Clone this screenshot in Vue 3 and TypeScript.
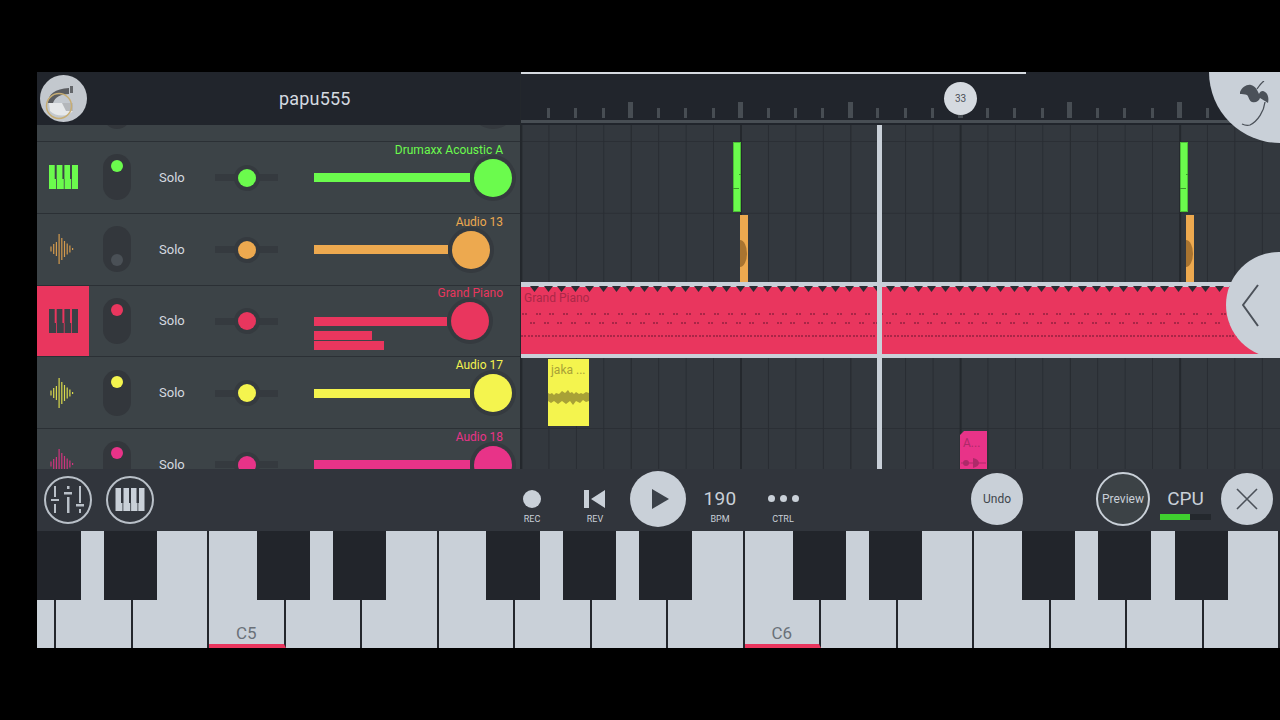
<script setup lang="ts">
interface Track { name: string; color: string; icon: 'keys' | 'wave'; on: boolean; bar: number; selected?: boolean; extras?: number[] }
interface Clip { x: number; y: number; w: number; h: number; color: string }

const tracks: Track[] = [
  { name: '', color: '#5d6469', icon: 'keys', on: true, bar: 156 },
  { name: 'Drumaxx Acoustic A', color: '#6bfb4d', icon: 'keys', on: true, bar: 156 },
  { name: 'Audio 13', color: '#eda94f', icon: 'wave', on: false, bar: 134 },
  { name: 'Grand Piano', color: '#e9365e', icon: 'keys', on: true, bar: 133, selected: true, extras: [58, 70] },
  { name: 'Audio 17', color: '#f4f44e', icon: 'wave', on: true, bar: 156 },
  { name: 'Audio 18', color: '#e83388', icon: 'wave', on: true, bar: 156 },
]

const clips: Clip[] = [
  { x: 212, y: 17, w: 8, h: 70, color: '#6bfb4d' },
  { x: 219, y: 90, w: 8, h: 67, color: '#eda94f' },
  { x: 659, y: 17, w: 8, h: 70, color: '#6bfb4d' },
  { x: 665, y: 90, w: 8, h: 67, color: '#eda94f' },
]

const ticks = Array.from({ length: 28 }, (_, i) => i % 4 === 3)
const waveBars = [5, 10, 14, 30, 22, 16, 11, 7, 2]
const whiteKeys = Array.from({ length: 17 }, (_, i) => (i === 3 ? 'C5' : i === 10 ? 'C6' : ''))
const blackKeys: [number, number][] = [
  [0, 44], [67, 53], [220, 53], [296, 53], [449, 54], [526, 53],
  [602, 53], [756, 53], [832, 53], [985, 53], [1061, 53], [1138, 53],
]

const beats = Array.from({ length: 56 }, (_, i) => i * 13.7)
const triangles = beats.map((x) => Math.round(9 + x))
const upperNotes = beats.flatMap((x) => [Math.round(1 + x), Math.round(4 + x)])
const lowerNotes = beats.flatMap((x) => [Math.round(9 + x), Math.round(12 + x)])
const fineNotes = Array.from({ length: 222 }, (_, i) => Math.round(i * 3.42))
</script>

<template>
  <div class="screen">
    <div class="upper">
      <section class="left">
        <header class="head">
          <svg class="avatar" viewBox="0 0 47 47">
            <circle cx="23.5" cy="23.5" r="23.5" fill="#c3c8ce" />
            <path d="M8 28 C8 19 15 14 29 13 L29 19 C21 19 15 22 13 28 Z" fill="#5a5c60" />
            <rect x="30" y="11" width="3" height="7" fill="#63666a" />
            <path d="M9 28 H33 V36 C28 42 16 42 10 36 Z" fill="#e6e8ea" />
            <path d="M22 28 H33 V36 H26 Z" fill="#b4b7bb" />
            <circle cx="19" cy="31" r="12.500" fill="none" stroke="#c7ad73" stroke-width="1.500" />
          </svg>
          <span class="user">papu555</span>
        </header>
        <div class="rows">
          <div class="rows-inner">
            <div v-for="t in tracks" :key="t.name" class="row" :style="{ '--c': t.color }">
              <div class="icon" :class="{ sel: t.selected }">
                <svg v-if="t.icon === 'keys'" class="keys-icon" viewBox="0 0 29 24">
                  <path d="M0 0H5.700V14H7V24H0Z M7.800 24V14H7.700V0H13.400V14H14.800V24Z M15.600 24V14H15.400V0H21V14H22V24Z M22.800 24V14H23V0H29V24Z" />
                </svg>
                <svg v-else class="wave-icon" viewBox="0 0 24 32">
                  <line v-for="(h, i) in waveBars" :key="i" :x1="1 + i * 2.7" :x2="1 + i * 2.7" :y1="16 - h / 2" :y2="16 + h / 2" />
                </svg>
              </div>
              <div class="pill"><span class="pill-dot" :class="{ off: !t.on }"></span></div>
              <span class="solo">{{ t.name ? 'Solo' : '' }}</span>
              <div class="pan"><span class="pan-halo"><span class="pan-knob"></span></span></div>
              <div class="vol">
                <span class="name">{{ t.name }}</span>
                <div class="vol-line">
                  <div class="bar" :style="{ width: t.bar + 'px' }">
                    <span v-for="(e, i) in t.extras" :key="i" class="extra" :class="'extra' + i" :style="{ width: e + 'px' }"></span>
                  </div>
                  <span class="vol-halo"><span class="vol-knob"></span></span>
                </div>
              </div>
            </div>
          </div>
        </div>
      </section>

      <section class="right">
        <div class="ruler">
          <div class="progress"></div>
          <div class="ticks">
            <span v-for="(tall, i) in ticks" :key="i" class="cell"><i class="tick" :class="{ tall }"></i></span>
          </div>
          <span class="marker">33</span>
        </div>
        <div class="tracks">
          <div v-for="(c, i) in clips" :key="i" class="clip" :class="{ green: c.h === 70 }" :style="{ left: c.x + 'px', top: c.y + 'px', width: c.w + 'px', height: c.h + 'px', background: c.color }">
            <span v-if="c.h === 70" class="mark"></span>
            <span v-if="c.h === 70" class="mark2"></span>
            <span v-else class="half"></span>
          </div>

          <div class="band">
            <svg class="notes" width="760" height="72">
              <path v-for="x in triangles" :key="x" :d="`M${x} 0h9l-4.500 6z`" fill="#2a2c33" />
              <g fill="#a92647">
                <rect v-for="(x, i) in upperNotes" :key="i" :x="x" y="27" width="2" height="2" />
                <rect v-for="(x, i) in lowerNotes" :key="i" :x="x" y="36" width="2" height="2" />
                <rect v-for="(x, i) in fineNotes" :key="i" :x="x" y="49" width="2" height="2" />
              </g>
            </svg>
            <span class="band-name">Grand Piano</span>
          </div>

          <div class="clip yellow">
            <span class="clip-text">jaka ...</span>
            <svg class="yellow-wave" viewBox="0 0 41 16" preserveAspectRatio="none">
              <path d="M0 3 L2 4 L4 3 L6 5 L8 3 L11 4 L14 1 L17 3 L20 0 L22 3 L24 2 L26 4 L28 2 L31 4 L33 3 L35 4 L38 2 L41 3 V11 L38 12 L35 10 L32 13 L28 11 L25 15 L22 11 L18 14 L14 11 L10 14 L6 11 L3 13 L0 11 Z" fill="#a8a136" />
            </svg>
          </div>
          <div class="clip pink">
            <span class="clip-text pink-text">A...</span>
            <svg class="pink-mark" viewBox="0 0 27 10">
              <circle cx="6" cy="5" r="3" fill="#ad2a69" />
              <rect x="1" y="4.500" width="25" height="1" fill="#ad2a69" />
              <path d="M13 0 C18 1 19 4 19 5 C19 7 17 9 13 10 Z" fill="#ad2a69" />
            </svg>
          </div>
          <div class="playhead"></div>
        </div>
      </section>
    </div>

    <div class="toolbar">
      <button class="ring first">
        <svg viewBox="2 2 44 44" class="ring-svg">
          <g fill="#b9c0c8">
            <rect x="10" y="10" width="2" height="11" /><rect x="7" y="23" width="8" height="2" /><rect x="10" y="28" width="2" height="9" />
            <rect x="23" y="10" width="2.500" height="3" /><rect x="20" y="16" width="8" height="2.500" /><rect x="23" y="21" width="2.500" height="16" />
            <rect x="35" y="10" width="2" height="17" /><rect x="32" y="28" width="8" height="2.500" /><rect x="35" y="33" width="2" height="4" />
          </g>
        </svg>
      </button>
      <button class="ring second">
        <svg viewBox="2 2 44 44" class="ring-svg">
          <path fill="#c9d0d8" d="M9.500 12H15V27H16.500V35H9.500Z M17.300 35V27H17.500V12H23V27H24.300V35Z M25.100 35V27H25V12H30.500V27H31.500V35Z M32.300 35V27H33V12H38.500V35Z" />
        </svg>
      </button>

      <div class="cell-t rec"><span class="rec-dot"></span><small>REC</small></div>
      <div class="cell-t rev">
        <svg width="22" height="18" viewBox="0 0 22 18"><path fill="#c9d0d8" d="M0 0H5V18H0Z M7 9L21 0V18Z" /></svg>
        <small>REV</small>
      </div>
      <button class="play">
        <svg width="20" height="20" viewBox="0 0 20 20"><path fill="#3b4149" d="M2 0L19 10L2 20Z" /></svg>
      </button>
      <div class="cell-t bpm"><b>190</b><small>BPM</small></div>
      <div class="cell-t ctrl">
        <span class="dots"><i></i><i></i><i></i></span>
        <small>CTRL</small>
      </div>
      <button class="solid undo">Undo</button>
      <button class="preview">Preview</button>
      <div class="cpu">
        <b>CPU</b>
        <span class="meter"><span class="meter-fill"></span></span>
      </div>
      <button class="solid close">
        <svg width="22" height="22" viewBox="0 0 22 22"><path d="M1 1L21 21M21 1L1 21" stroke="#4b5159" stroke-width="1.6" fill="none" /></svg>
      </button>
    </div>

    <div class="keyboard">
      <div class="whites">
        <div v-for="(k, i) in whiteKeys" :key="i" class="white" :class="{ c: k }">
          <span v-if="k" class="note">{{ k }}</span>
        </div>
      </div>
      <span v-for="(b, i) in blackKeys" :key="i" class="black" :style="{ left: b[0] + 'px', width: b[1] + 'px' }"></span>
    </div>

    <div class="fruit-btn">
      <svg class="fruit" width="29" height="46" viewBox="0 0 29 46">
        <path d="M0 11 C2 6 7 3 11 4 C15 5 17 8 19 13 C20 10 23 9 25 11 C28 13 29 17 28 22 C25 20 22 18 20 17 C19 20 16 22 12 21 C9 20 9 16 7 14 C5 13 2 13 0 13 Z" fill="#4b5159" />
        <path d="M17 8 C19 5 21 2 24 0 M25 21 C24 30 18 40 10 44 C7 45 4 44 2 43" stroke="#4b5159" stroke-width="1.300" fill="none" />
      </svg>
    </div>
    <div class="chevron-btn">
      <svg width="18" height="44" viewBox="0 0 18 44"><path d="M16 1L1 21L16 42" stroke="#4b5159" stroke-width="2" fill="none" /></svg>
    </div>
  </div>
</template>

<style scoped>
.screen {
  position: relative;
  margin: 72px 0 0 37px;
  width: 1243px;
  height: 576px;
  overflow: hidden;
  font-family: Roboto, "Liberation Sans", sans-serif;
  color: #d5dae0;
}
.upper { display: flex; height: 397px; }
.left { width: 484px; flex: none; display: flex; flex-direction: column; border-right: 1px solid #23272c; box-sizing: border-box; }
.head { height: 53px; flex: none; background: #21252c; display: flex; align-items: center; position: relative; }
.avatar { width: 47px; height: 47px; margin-left: 3px; flex: none; }
.user { margin-left: 192px; font-size: 18px; letter-spacing: .2px; color: #d5dae0; }
.rows { height: 344px; overflow: hidden; }
.rows-inner { margin-top: -54.750px; }
.row {
  height: 71.750px;
  box-sizing: border-box;
  display: flex;
  align-items: center;
  background: #3c4347;
  border-bottom: 1px solid #2b3035;
}
.icon { width: 52px; align-self: stretch; flex: none; display: flex; align-items: center; justify-content: center; }
.icon.sel { background: var(--c); }
.keys-icon { width: 29px; height: 24px; fill: var(--c); }
.icon.sel .keys-icon { fill: #3c4046; }
.wave-icon { width: 24px; height: 32px; margin-left: -3px; }
.wave-icon line { stroke: var(--c); stroke-width: 1.200; opacity: .85; }
.pill { width: 28px; height: 46px; margin-left: 14px; border-radius: 14px; background: #33373c; flex: none; display: flex; justify-content: center; padding-top: 6px; box-sizing: border-box; }
.pill-dot { width: 12px; height: 12px; border-radius: 50%; background: var(--c); }
.pill-dot.off { background: #4a5056; margin-top: 22px; }
.solo { width: 24px; margin: 1px 0 0 28px; flex: none; font-size: 13px; line-height: 10px; color: #d5dae0; white-space: nowrap; }
.pan { width: 63px; height: 7px; margin: 1px 0 0 32px; flex: none; background: #353a3f; display: flex; align-items: center; justify-content: center; }
.pan-halo { width: 26px; height: 26px; border-radius: 50%; background: #353a3f; display: flex; align-items: center; justify-content: center; flex: none; }
.pan-knob { width: 18px; height: 18px; border-radius: 50%; background: var(--c); }
.vol { margin-left: 36px; width: 207px; height: 71px; flex: none; display: grid; grid-template-columns: 207px; }
.name { grid-area: 1 / 1; justify-self: start; align-self: start; width: 189px; text-align: right; margin-top: 1px; font-size: 12px; line-height: 14px; color: var(--c); white-space: nowrap; }
.vol-line { grid-area: 1 / 1; align-self: center; display: flex; align-items: center; margin-top: 1px; }
.bar { height: 9px; background: var(--c); position: relative; flex: none; }
.extra { position: absolute; left: 0; height: 9px; background: var(--c); }
.extra0 { top: 14px; }
.extra1 { top: 24px; }
.vol-halo { width: 46px; height: 46px; border-radius: 50%; background: #353a3f; display: flex; align-items: center; justify-content: center; flex: none; }
.vol-knob { width: 38px; height: 38px; border-radius: 50%; background: var(--c); }

.right { flex: 1; min-width: 0; display: flex; flex-direction: column; }
.ruler { height: 53px; flex: none; background: #21252c; position: relative; }
.progress { width: 505px; height: 2px; background: #d5dae0; }
.ticks { display: flex; align-items: flex-end; height: 49px; padding-left: 13.800px; box-sizing: border-box; border-bottom: 3px solid #484e54; }
.cell { width: 27.450px; flex: none; display: flex; justify-content: center; align-items: flex-end; padding-bottom: 2px; }
.tick { width: 3px; height: 10px; background: #474d53; display: block; }
.tick.tall { width: 5px; height: 16px; }
.marker { position: absolute; left: 423px; top: 10px; width: 33px; height: 33px; border-radius: 50%; background: #d5dae0; color: #4b5159; font-size: 10px; display: flex; align-items: center; justify-content: center; }

.tracks {
  flex: 1;
  position: relative;
  overflow: hidden;
  background-color: #33383e;
  background-image:
    linear-gradient(90deg, #24282d 2px, transparent 2px),
    linear-gradient(90deg, #282c31 1px, transparent 1px),
    linear-gradient(90deg, #282c32 1px, transparent 1px),
    linear-gradient(#2b2f35 1px, transparent 1px);
  background-size: 219.600px 100%, 109.800px 100%, 27.450px 100%, 100% 71.750px;
  background-position: 219px 0, 0 0, 0 0, 0 16px;
}
.clip { position: absolute; overflow: hidden; }
.clip.green { box-shadow: inset 0 0 0 1px #4cc036; }
.mark { position: absolute; left: 0; top: 46px; width: 6px; height: 1px; background: #3a9a2a; }
.mark2 { position: absolute; right: 0; top: 32px; width: 2px; height: 1px; background: #3a9a2a; }
.half { position: absolute; left: -7px; top: 25px; width: 14px; height: 27px; border-radius: 50%; background: #a97430; }
.band {
  position: absolute;
  left: 0;
  right: 0;
  top: 157px;
  height: 76px;
  box-sizing: border-box;
  background: #e9365e;
  border-top: 5px solid #c9d0d8;
  border-bottom: 4px solid #c9d0d8;
}
.band-name { position: absolute; left: 3px; top: 4px; font-size: 12px; color: #ab2848; }
.notes { position: absolute; left: 0; top: -1px; display: block; }
.yellow { left: 27px; top: 234px; width: 41px; height: 67px; background: #f4f44e; }
.clip-text { display: block; font-size: 12px; color: #a8a136; margin: 4px 0 0 3px; white-space: nowrap; }
.yellow-wave { position: absolute; left: 0; top: 31px; width: 41px; height: 16px; }
.pink {
  left: 439px;
  top: 306px;
  width: 27px;
  height: 38px;
  background: #e83388;
  clip-path: polygon(4px 0, 100% 0, 100% 100%, 0 100%, 0 4px);
}
.pink-text { color: #ad2a69; margin: 5px 0 0 3px; }
.pink-mark { position: absolute; left: 0; top: 27px; width: 27px; height: 10px; }
.playhead { position: absolute; left: 356px; top: 0; bottom: 0; width: 5px; background: #c9d0d8; }

.toolbar { height: 62px; background: #31353c; display: flex; align-items: center; padding-left: 7px; box-sizing: border-box; }
button { border: 0; padding: 0; font-family: inherit; display: flex; align-items: center; justify-content: center; flex: none; }
.ring { width: 48px; height: 48px; border-radius: 50%; background: transparent; border: 2px solid #b9c0c8; box-sizing: border-box; }
.ring-svg { width: 44px; height: 44px; }
.second { margin-left: 14px; }
.cell-t { width: 40px; height: 50px; flex: none; display: flex; flex-direction: column; align-items: center; justify-content: space-between; }
.cell-t small { font-size: 9px; line-height: 11px; color: #c9d0d8; }
.rec { margin-left: 358px; }
.rec-dot { width: 18px; height: 18px; border-radius: 50%; background: #c9d0d8; margin-top: 15px; }
.rev { margin-left: 23px; }
.rev svg { margin-top: 15px; }
.play { width: 56px; height: 56px; border-radius: 50%; background: #c9d0d8; margin: -2px 0 0 15px; }
.play svg { margin-left: 4px; }
.bpm { margin-left: 14px; }
.bpm b { font-weight: 400; font-size: 19px; line-height: 22px; margin-top: 13px; color: #c9d0d8; letter-spacing: .3px; }
.ctrl { margin-left: 23px; }
.dots { display: flex; gap: 5px; margin-top: 20px; }
.dots i { width: 7px; height: 7px; border-radius: 50%; background: #c9d0d8; }
.solid { width: 52px; height: 52px; border-radius: 50%; background: #c9d0d8; color: #3f454c; font-size: 12px; margin-top: -2px; }
.undo { margin-left: 168px; }
.preview { width: 54px; height: 54px; margin: -2px 0 0 73px; border-radius: 50%; background: #3c4246; border: 2px solid #c9d0d8; box-sizing: border-box; color: #c9d0d8; font-size: 12px; }
.cpu { width: 51px; margin-left: 10px; flex: none; display: flex; flex-direction: column; align-items: center; height: 44px; }
.cpu b { font-weight: 400; font-size: 19px; line-height: 22px; margin-top: 10px; color: #c9d0d8; }
.meter { width: 51px; height: 6px; background: #24282d; margin-top: 4px; display: block; flex: none; }
.meter-fill { display: block; width: 30px; height: 100%; background: #3fcf2f; }
.close { margin-left: 10px; }

.keyboard { height: 117px; position: relative; overflow: hidden; background: #22252b; }
.whites { display: flex; margin-left: -57.500px; }
.white { width: 76.500px; height: 117px; flex: none; box-sizing: border-box; background: #c9d0d8; border-right: 2px solid #23262c; position: relative; display: flex; align-items: flex-end; justify-content: center; }
.white.c { border-bottom: 4px solid #e9365e; }
.note { font-size: 17px; line-height: 20px; color: #6a7078; margin-bottom: 1px; }
.black { position: absolute; top: 0; height: 69px; background: #22252b; }

.fruit-btn { position: absolute; right: -71px; top: -71px; width: 142px; height: 142px; border-radius: 50%; background: #c9d0d8; }
.fruit { position: absolute; left: 31px; top: 80px; }
.chevron-btn { position: absolute; right: -52px; top: 180px; width: 106px; height: 106px; border-radius: 50%; background: #c9d0d8; }
.chevron-btn svg { position: absolute; left: 16px; top: 32px; }
</style>

<style>
html, body { background: #000; margin: 0; }
</style>
